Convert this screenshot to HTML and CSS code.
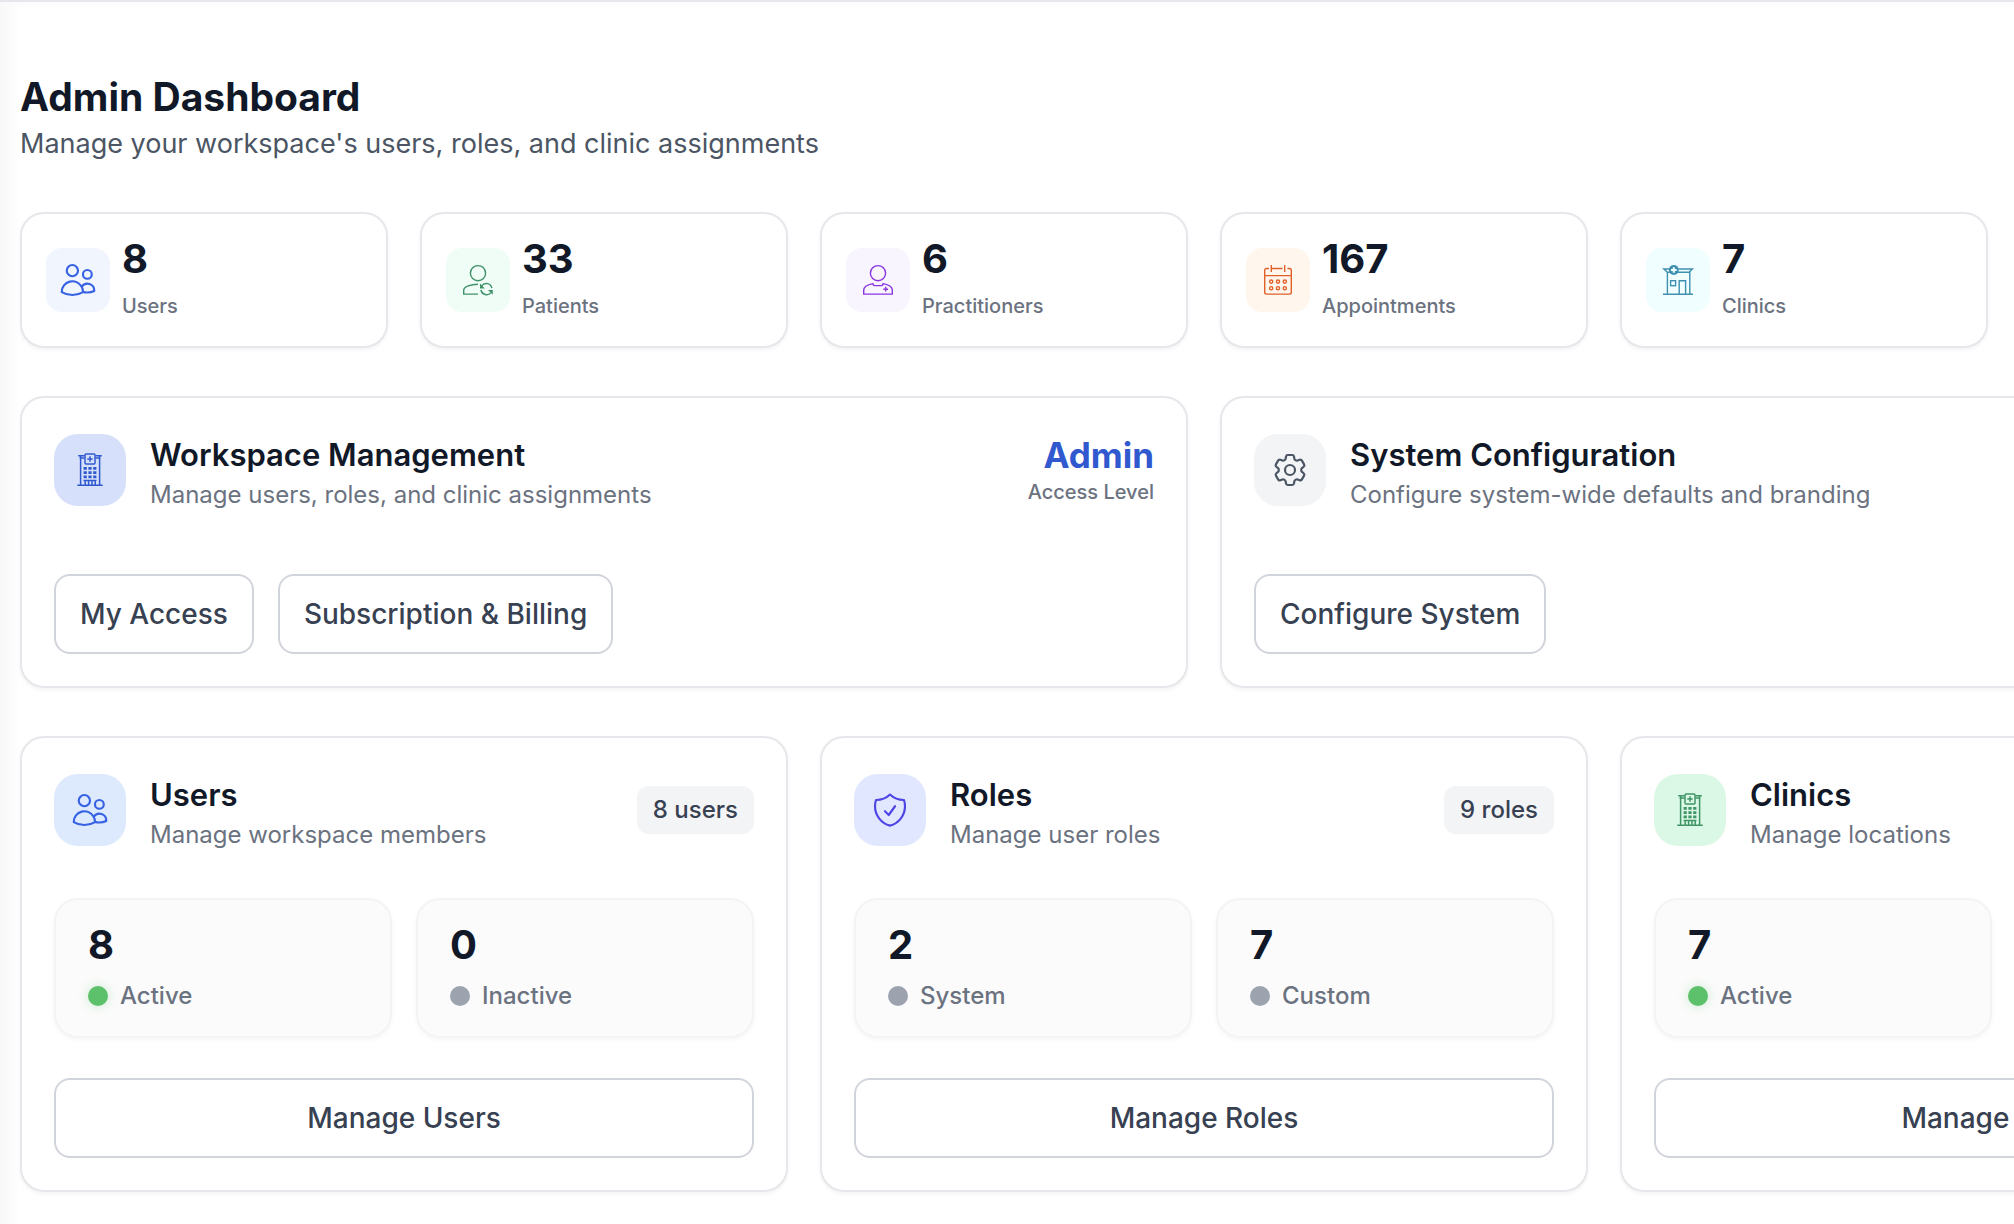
FILE: index.html
```html
<!DOCTYPE html>
<html lang="en">
<head>
	<title>Admin Dashboard</title>
	<meta charset="utf-8">
	<meta name="viewport" content="width=device-width, initial-scale=1">
	<link rel="stylesheet" href="styles.css">
</head>
<body>

<!-- shared icons -->
<svg class="sprite" aria-hidden="true">
	<symbol id="users" viewBox="0 0 24 24">
		<path d="M15 19.128a9.38 9.38 0 0 0 2.625.372 9.337 9.337 0 0 0 4.121-.952 4.125 4.125 0 0 0-7.533-2.493M15 19.128v-.003c0-1.113-.285-2.16-.786-3.07M15 19.128v.106A12.318 12.318 0 0 1 8.624 21c-2.331 0-4.512-.645-6.374-1.766l-.001-.109a6.375 6.375 0 0 1 11.964-3.07M12 6.375a3.375 3.375 0 1 1-6.75 0 3.375 3.375 0 0 1 6.75 0Zm8.25 2.25a2.625 2.625 0 1 1-5.25 0 2.625 2.625 0 0 1 5.25 0Z"/>
	</symbol>
	<symbol id="building" viewBox="0 0 40 40">
		<path d="M14.5 5.8H8.2M14.5 8H9.5M25.5 5.8h6.3M25.5 8h5M10.6 6v29M29.6 6v29M7.3 35.3h25.4"/>
		<rect x="15" y="4" width="10" height="10" rx="1"/>
		<path d="M20 6.3v5.4M17.3 9h5.4M13.5 30.5h13M15.2 30.5v4.5M18.6 30.5v4.5M22 30.5v4.5M25.2 30.5v4.5"/>
		<path class="solid" d="M13.6 17h3.2v2.8h-3.2zM18.4 17h3.2v2.8h-3.2zM23.2 17h3.2v2.8h-3.2zM13.6 21.2h3.2v2.8h-3.2zM18.4 21.2h3.2v2.8h-3.2zM23.2 21.2h3.2v2.8h-3.2zM13.6 25.4h3.2v2.8h-3.2zM18.4 25.4h3.2v2.8h-3.2zM23.2 25.4h3.2v2.8h-3.2z"/>
	</symbol>
</svg>

<main class="page">
	<header class="page-head">
		<h1>Admin Dashboard</h1>
		<p>Manage your workspace's users, roles, and clinic assignments</p>
	</header>

	<section class="stats">
		<div class="card stat">
			<span class="stat-icon blue"><svg><use href="#users"/></svg></span>
			<div>
				<div class="num">8</div>
				<div class="stat-label">Users</div>
			</div>
		</div>
		<div class="card stat">
			<span class="stat-icon green">
				<svg class="thin" viewBox="0 0 40 40">
					<circle cx="20" cy="13.2" r="7.6"/>
					<path d="M20 24.2C13 24.2 5.7 26.6 5.7 30.2V34.1H20"/>
					<path d="M33.9 28.2a5.7 5.7 0 0 0-10.2-2.4M22.9 30a5.7 5.7 0 0 0 10 2.6"/>
					<path class="solid" d="M22 23.6v4.8h4.8zM34.8 34.8V30H30z"/>
				</svg>
			</span>
			<div>
				<div class="num">33</div>
				<div class="stat-label">Patients</div>
			</div>
		</div>
		<div class="card stat">
			<span class="stat-icon purple">
				<svg class="thin" viewBox="0 0 40 40">
					<circle cx="20" cy="13.2" r="7.6"/>
					<path d="M14.8 23.6C9.6 24.6 5.7 27 5.7 30.2V34.1H34.3V30.2C34.3 27 30.4 24.6 25.2 23.6C25 24.9 24.4 25.6 23.4 25.6H16.6C15.6 25.6 15 24.9 14.8 23.6Z"/>
					<path d="M27.7 26.8v4.8M25.3 29.2h4.8"/>
				</svg>
			</span>
			<div>
				<div class="num">6</div>
				<div class="stat-label">Practitioners</div>
			</div>
		</div>
		<div class="card stat">
			<span class="stat-icon orange">
				<svg class="thin" viewBox="0 0 40 40">
					<path d="M11 8.5H8.5a1.8 1.8 0 0 0-1.8 1.8v22a1.8 1.8 0 0 0 1.8 1.8h23a1.8 1.8 0 0 0 1.8-1.8v-22a1.8 1.8 0 0 0-1.8-1.8H29.5M13.3 8.5H24.5M13.3 5v7M26.7 5v7M6.7 15.6h26.6"/>
					<circle cx="13.2" cy="21.6" r="1.6"/><circle cx="20" cy="21.6" r="1.6"/><circle cx="26.8" cy="21.6" r="1.6"/>
					<circle cx="13.2" cy="28.2" r="1.6"/><circle cx="20" cy="28.2" r="1.6"/><circle cx="26.8" cy="28.2" r="1.6"/>
				</svg>
			</span>
			<div>
				<div class="num">167</div>
				<div class="stat-label">Appointments</div>
			</div>
		</div>
		<div class="card stat">
			<span class="stat-icon cyan">
				<svg class="thin" viewBox="0 0 40 40">
					<path d="M11 9H5.8L9.4 12.2H31L34.4 9H20.5M9.4 12.2V34M31.8 11.5V34M5 34.2h30"/>
					<rect x="12.6" y="20.7" width="5" height="5"/>
					<path d="M21.2 34V20.7h6.4V34"/>
					<circle class="solid" cx="15.8" cy="10" r="5"/>
					<path class="plus" d="M15.8 7.2v5.6M13 10h5.6"/>
				</svg>
			</span>
			<div>
				<div class="num">7</div>
				<div class="stat-label">Clinics</div>
			</div>
		</div>
	</section>

	<section class="wide-cards">
		<article class="card panel">
			<header class="panel-head">
				<span class="panel-icon workspace"><svg class="building"><use href="#building"/></svg></span>
				<div class="panel-title">
					<h2>Workspace Management</h2>
					<p>Manage users, roles, and clinic assignments</p>
				</div>
				<div class="access">
					<strong>Admin</strong>
					<span>Access Level</span>
				</div>
			</header>
			<div class="actions">
				<button type="button">My Access</button>
				<button type="button">Subscription &amp; Billing</button>
			</div>
		</article>
		<article class="card panel">
			<header class="panel-head">
				<span class="panel-icon system">
					<svg viewBox="0 0 24 24">
						<path d="M9.594 3.94c.09-.542.56-.94 1.11-.94h2.593c.55 0 1.02.398 1.11.94l.213 1.281c.063.374.313.686.645.87.074.04.147.083.22.127.325.196.72.257 1.075.124l1.217-.456a1.125 1.125 0 0 1 1.37.49l1.296 2.247a1.125 1.125 0 0 1-.26 1.431l-1.003.827c-.293.241-.438.613-.43.992a7.723 7.723 0 0 1 0 .255c-.008.378.137.75.43.991l1.004.827c.424.35.534.955.26 1.43l-1.298 2.247a1.125 1.125 0 0 1-1.369.491l-1.217-.456c-.355-.133-.75-.072-1.076.124a6.47 6.47 0 0 1-.22.128c-.331.183-.581.495-.644.869l-.213 1.281c-.09.543-.56.94-1.11.94h-2.594c-.55 0-1.019-.398-1.11-.94l-.213-1.281c-.062-.374-.312-.686-.644-.87a6.52 6.52 0 0 1-.22-.127c-.325-.196-.72-.257-1.076-.124l-1.217.456a1.125 1.125 0 0 1-1.369-.49l-1.297-2.247a1.125 1.125 0 0 1 .26-1.431l1.004-.827c.292-.24.437-.613.43-.991a6.932 6.932 0 0 1 0-.255c.007-.38-.138-.751-.43-.992l-1.004-.827a1.125 1.125 0 0 1-.26-1.43l1.297-2.247a1.125 1.125 0 0 1 1.37-.491l1.216.456c.356.133.751.072 1.076-.124.072-.044.146-.086.22-.128.332-.183.582-.495.644-.869l.214-1.28Z"/>
						<circle cx="12" cy="12" r="3"/>
					</svg>
				</span>
				<div class="panel-title">
					<h2>System Configuration</h2>
					<p>Configure system-wide defaults and branding</p>
				</div>
			</header>
			<div class="actions">
				<button type="button">Configure System</button>
			</div>
		</article>
	</section>

	<section class="third-cards">
		<article class="card panel">
			<header class="panel-head">
				<span class="panel-icon users"><svg><use href="#users"/></svg></span>
				<div class="panel-title">
					<h2>Users</h2>
					<p>Manage workspace members</p>
				</div>
				<span class="badge">8 users</span>
			</header>
			<div class="tiles">
				<div class="tile">
					<div class="num">8</div>
					<div class="tile-label"><i class="dot on"></i>Active</div>
				</div>
				<div class="tile">
					<div class="num">0</div>
					<div class="tile-label"><i class="dot"></i>Inactive</div>
				</div>
			</div>
			<button type="button" class="full">Manage Users</button>
		</article>
		<article class="card panel">
			<header class="panel-head">
				<span class="panel-icon roles">
					<svg viewBox="0 0 24 24">
						<path d="M9 12.75 11.25 15 15 9.75m-3-7.036A11.959 11.959 0 0 1 3.598 6 11.99 11.99 0 0 0 3 9.749c0 5.592 3.824 10.29 9 11.623 5.176-1.332 9-6.03 9-11.622 0-1.31-.21-2.571-.598-3.751h-.152c-3.196 0-6.1-1.248-8.25-3.285Z"/>
					</svg>
				</span>
				<div class="panel-title">
					<h2>Roles</h2>
					<p>Manage user roles</p>
				</div>
				<span class="badge">9 roles</span>
			</header>
			<div class="tiles">
				<div class="tile">
					<div class="num">2</div>
					<div class="tile-label"><i class="dot"></i>System</div>
				</div>
				<div class="tile">
					<div class="num">7</div>
					<div class="tile-label"><i class="dot"></i>Custom</div>
				</div>
			</div>
			<button type="button" class="full">Manage Roles</button>
		</article>
		<article class="card panel">
			<header class="panel-head">
				<span class="panel-icon clinics"><svg class="building"><use href="#building"/></svg></span>
				<div class="panel-title">
					<h2>Clinics</h2>
					<p>Manage locations</p>
				</div>
			</header>
			<div class="tiles">
				<div class="tile">
					<div class="num">7</div>
					<div class="tile-label"><i class="dot on"></i>Active</div>
				</div>
				<div class="tile"></div>
			</div>
			<button type="button" class="full">Manage Clinics</button>
		</article>
	</section>
</main>

</body>
</html>
```
FILE: styles.css
```css
* {
	box-sizing: border-box;
}
body {
	margin: 0;
	min-height: 100vh;
	overflow-x: hidden;
	border-top: 2px solid #e5e7eb;
	background: linear-gradient(to right, #f8f8f8, rgba(255,255,255,0) 20px), linear-gradient(#fafafa, #fff 8px);
	color: #111827;
	font-family: Inter, sans-serif;
}
h1, h2, p {
	margin: 0;
}
.sprite {
	display: none;
}

/* the content is wider than the window and runs off its right side */
.page {
	width: calc(100% + 394px);
	padding: 70px 20px 32px;
}
.page-head {
	margin-bottom: 48px;
}
h1 {
	font-size: 39px;
	line-height: 50px;
	font-weight: 700;
}
.page-head p {
	margin-top: 2px;
	font-size: 27px;
	line-height: 40px;
	color: #4b5563;
}

.stats, .wide-cards, .third-cards {
	display: grid;
	gap: 32px;
	margin-bottom: 48px;
}
.stats {
	grid-template-columns: repeat(6, 1fr);
}
.wide-cards {
	grid-template-columns: repeat(2, 1fr);
}
.third-cards {
	grid-template-columns: repeat(3, 1fr);
	margin-bottom: 0;
}

.card {
	background: #fff;
	border: 2px solid #e5e7eb;
	border-radius: 24px;
	box-shadow: 0 2px 4px rgba(0,0,0,0.05);
}
.num {
	font-size: 40px;
	line-height: 42px;
	font-weight: 700;
}

/* stat cards */
.stat {
	display: flex;
	align-items: center;
	gap: 12px;
	padding: 22px 24px;
}
.stat .num {
	line-height: 46px;
	margin-bottom: 6px;
}
.stat-label {
	font-size: 20px;
	line-height: 36px;
	font-weight: 500;
	color: #6b7280;
}
.stat-icon, .panel-icon {
	display: flex;
	flex: none;
	align-items: center;
	justify-content: center;
}
.stat-icon {
	width: 64px;
	height: 64px;
	border-radius: 16px;
}
.panel-icon {
	width: 72px;
	height: 72px;
	border-radius: 24px;
}
.stat-icon svg, .panel-icon svg {
	width: 40px;
	height: 40px;
	fill: none;
	stroke: currentColor;
	stroke-width: 1.3;
	stroke-linecap: round;
	stroke-linejoin: round;
}
.stat-icon svg.thin {
	stroke-width: 1.4;
	stroke-linecap: butt;
	stroke-linejoin: miter;
}
.panel-icon svg.building {
	stroke-width: 1.5;
	stroke-linecap: butt;
}
.solid {
	fill: currentColor;
	stroke: none;
}
.plus {
	stroke: #f0feff;
	stroke-width: 2;
}
.blue { background: #f0f5fe; color: #3662e3; }
.green { background: #f0fdf6; color: #3f9169; }
.purple { background: #f8f5fe; color: #8a36e0; }
.orange { background: #fff7ed; color: #e0602a; }
.cyan { background: #f0feff; color: #3f90b0; }
.workspace { background: #d6e0fa; color: #3059d0; }
.system { background: #f3f4f6; color: #4b5563; }
.users { background: #dde9fc; color: #3662e3; }
.roles { background: #e0e7ff; color: #4f46e5; }
.clinics { background: #dbf8e6; color: #409566; }

/* panels */
.panel {
	padding: 32px;
}
.panel-head {
	display: flex;
	align-items: center;
	gap: 24px;
}
.panel-title {
	flex: 1;
}
h2 {
	font-size: 31px;
	line-height: 50px;
	font-weight: 600;
}
.panel-title p {
	font-size: 24px;
	line-height: 30px;
	color: #6b7280;
}
.access {
	text-align: right;
}
.access strong {
	display: block;
	font-size: 35px;
	line-height: 44px;
	color: #3059d0;
}
.access span {
	display: block;
	font-size: 20px;
	line-height: 30px;
	font-weight: 500;
	color: #6b7280;
}
.badge {
	padding: 8px 16px;
	border-radius: 12px;
	background: #f3f4f6;
	color: #374151;
	font-size: 24px;
	line-height: 32px;
	font-weight: 500;
}
.actions {
	display: flex;
	gap: 24px;
	margin-top: 64px;
}
button {
	height: 80px;
	padding: 0 24px;
	border: 2px solid #d1d5db;
	border-radius: 16px;
	background: #fff;
	color: #374151;
	font-family: inherit;
	font-size: 28px;
	font-weight: 500;
}
button.full {
	width: 100%;
}

.tiles {
	display: grid;
	grid-template-columns: 1fr 1fr;
	gap: 24px;
	margin: 48px 0 40px;
}
.tile {
	padding: 24px 32px;
	border: 2px solid #f3f4f6;
	border-radius: 24px;
	background: #fbfbfb;
	box-shadow: 0 2px 4px rgba(0,0,0,0.04);
}
.tile-label {
	display: flex;
	align-items: center;
	gap: 12px;
	margin-top: 14px;
	font-size: 24px;
	line-height: 32px;
	font-weight: 500;
	color: #6b7280;
}
.dot {
	width: 20px;
	height: 20px;
	border-radius: 50%;
	background: #9ca3af;
}
.dot.on {
	background: #5cc16a;
	box-shadow: 0 0 12px rgba(92,193,106,0.3);
}
```
